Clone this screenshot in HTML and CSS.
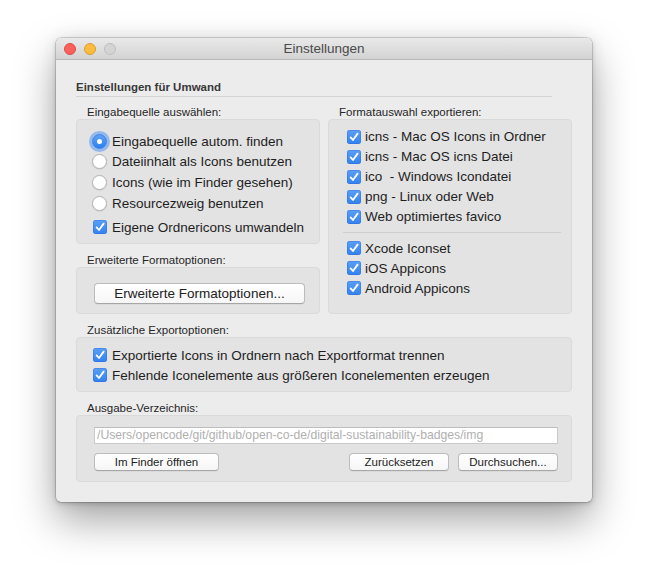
FILE: index.html
```html
<!DOCTYPE html>
<html lang="de">
<head>
<meta charset="utf-8">
<title>Einstellungen</title>
<link rel="stylesheet" href="styles.css">
</head>
<body>
<div class="window">
  <div class="titlebar">
    <div class="lights">
      <span class="light red"></span>
      <span class="light yellow"></span>
      <span class="light gray"></span>
    </div>
    <div class="title">Einstellungen</div>
    <div class="lights-spacer"></div>
  </div>
  <div class="content">
    <div class="heading">Einstellungen für Umwand</div>
    <div class="rule"></div>
    <div class="columns">
      <div class="col">
        <div class="label">Eingabequelle auswählen:</div>
        <div class="box box-source">
          <div class="row"><span class="ind"><span class="radio on"></span></span>Eingabequelle autom. finden</div>
          <div class="row"><span class="ind"><span class="radio"></span></span>Dateiinhalt als Icons benutzen</div>
          <div class="row"><span class="ind"><span class="radio"></span></span>Icons (wie im Finder gesehen)</div>
          <div class="row"><span class="ind"><span class="radio"></span></span>Resourcezweig benutzen</div>
          <div class="row row-sep"><span class="ind"><span class="check"><svg viewBox="0 0 14 14" width="14" height="14"><path d="M3.6 7.4 L6 10 L10.6 3.6" /></svg></span></span>Eigene Ordnericons umwandeln</div>
        </div>
        <div class="label">Erweiterte Formatoptionen:</div>
        <div class="box box-adv">
          <button class="btn btn-regular">Erweiterte Formatoptionen...</button>
        </div>
      </div>
      <div class="col">
        <div class="label">Formatauswahl exportieren:</div>
        <div class="box box-format">
          <div class="row"><span class="ind"><span class="check"><svg viewBox="0 0 14 14" width="14" height="14"><path d="M3.6 7.4 L6 10 L10.6 3.6" /></svg></span></span>icns - Mac OS Icons in Ordner</div>
          <div class="row"><span class="ind"><span class="check"><svg viewBox="0 0 14 14" width="14" height="14"><path d="M3.6 7.4 L6 10 L10.6 3.6" /></svg></span></span>icns - Mac OS icns Datei</div>
          <div class="row"><span class="ind"><span class="check"><svg viewBox="0 0 14 14" width="14" height="14"><path d="M3.6 7.4 L6 10 L10.6 3.6" /></svg></span></span>ico&nbsp; - Windows Icondatei</div>
          <div class="row"><span class="ind"><span class="check"><svg viewBox="0 0 14 14" width="14" height="14"><path d="M3.6 7.4 L6 10 L10.6 3.6" /></svg></span></span>png - Linux oder Web</div>
          <div class="row"><span class="ind"><span class="check"><svg viewBox="0 0 14 14" width="14" height="14"><path d="M3.6 7.4 L6 10 L10.6 3.6" /></svg></span></span>Web optimiertes favico</div>
          <div class="divider"></div>
          <div class="row"><span class="ind"><span class="check"><svg viewBox="0 0 14 14" width="14" height="14"><path d="M3.6 7.4 L6 10 L10.6 3.6" /></svg></span></span>Xcode Iconset</div>
          <div class="row"><span class="ind"><span class="check"><svg viewBox="0 0 14 14" width="14" height="14"><path d="M3.6 7.4 L6 10 L10.6 3.6" /></svg></span></span>iOS Appicons</div>
          <div class="row"><span class="ind"><span class="check"><svg viewBox="0 0 14 14" width="14" height="14"><path d="M3.6 7.4 L6 10 L10.6 3.6" /></svg></span></span>Android Appicons</div>
        </div>
      </div>
    </div>
    <div class="label">Zusätzliche Exportoptionen:</div>
    <div class="box box-extra">
      <div class="row"><span class="ind"><span class="check"><svg viewBox="0 0 14 14" width="14" height="14"><path d="M3.6 7.4 L6 10 L10.6 3.6" /></svg></span></span>Exportierte Icons in Ordnern nach Exportformat trennen</div>
      <div class="row"><span class="ind"><span class="check"><svg viewBox="0 0 14 14" width="14" height="14"><path d="M3.6 7.4 L6 10 L10.6 3.6" /></svg></span></span>Fehlende Iconelemente aus größeren Iconelementen erzeugen</div>
    </div>
    <div class="label">Ausgabe-Verzeichnis:</div>
    <div class="box box-out">
      <div class="field">/Users/opencode/git/github/open-co-de/digital-sustainability-badges/img</div>
      <div class="btn-row">
        <button class="btn btn-small btn-finder">Im Finder öffnen</button>
        <span class="spacer"></span>
        <button class="btn btn-small btn-reset">Zurücksetzen</button>
        <button class="btn btn-small btn-browse">Durchsuchen...</button>
      </div>
    </div>
  </div>
</div>
</body>
</html>
```

FILE: styles.css
```css
* { box-sizing: border-box; }

html, body {
  margin: 0;
  padding: 0;
  background: #ffffff;
}

body {
  font-family: "Liberation Sans", Arial, sans-serif;
  color: #222;
  padding: 38px 0 0 56px;
  height: 576px;
  overflow: hidden;
}

.window {
  width: 536px;
  height: 464px;
  background: #ececec;
  border-radius: 5px;
  box-shadow:
    0 0 0 0.5px rgba(0, 0, 0, 0.28),
    0 2px 4px rgba(0, 0, 0, 0.16),
    0 18px 40px rgba(0, 0, 0, 0.36),
    0 0 16px rgba(0, 0, 0, 0.08);
  overflow: hidden;
}

.titlebar {
  height: 22px;
  display: grid;
  grid-template-columns: 1fr auto 1fr;
  align-items: center;
  background: linear-gradient(#e9e9e9, #d3d3d3);
  border-bottom: 1px solid #b8b8b8;
}

.lights {
  display: flex;
  gap: 8px;
  padding-left: 8px;
  padding-top: 1px;
}

.light {
  width: 12px;
  height: 12px;
  border-radius: 50%;
}
.light.red { background: #fc605c; border: 0.5px solid #de4a44; }
.light.yellow { background: #fdbc40; border: 0.5px solid #dc9d2b; }
.light.gray { background: #d4d4d4; border: 0.5px solid #bdbdbd; }

.title {
  font-size: 13.5px;
  color: #4a4a4a;
  line-height: 16px;
}

.content {
  padding: 20px 20px 20px 20px;
}

.heading {
  font-size: 11.5px;
  font-weight: bold;
  color: #383838;
  line-height: 14px;
}

.rule {
  width: 476px;
  height: 1px;
  margin-top: 2px;
  background: #d4d4d4;
}

.columns {
  display: grid;
  grid-template-columns: 244px 244px;
  column-gap: 8px;
}

.col {
  display: flex;
  flex-direction: column;
}

.columns .col > .label:first-child {
  margin-top: 8px;
}

.label {
  font-size: 11.5px;
  line-height: 14px;
  color: #262626;
  padding-left: 11px;
  margin-top: 9px;
}

.box {
  background: #e3e3e3;
  border: 1px solid #dadada;
  border-radius: 4px;
}

.row {
  display: flex;
  align-items: center;
  height: 20px;
  font-size: 13.5px;
  color: #1e1e1e;
  white-space: nowrap;
}

.ind {
  width: 15px;
  height: 15px;
  margin-right: 5px;
  display: flex;
  align-items: center;
  justify-content: center;
  flex: none;
}

.radio {
  width: 15px;
  height: 15px;
  border-radius: 50%;
  background: #ffffff;
  border: 1px solid #b3b3b3;
  box-shadow: 0 0.5px 1px rgba(0, 0, 0, 0.12);
}

.radio.on {
  position: relative;
  background: linear-gradient(#5fa4f7, #2a7ff0);
  border: 1px solid #2f7ae0;
  box-shadow: 0 0 0 3px rgba(78, 152, 245, 0.55);
}

.radio.on::after {
  content: "";
  position: absolute;
  left: 4px;
  top: 4px;
  width: 5px;
  height: 5px;
  border-radius: 50%;
  background: #fff;
}

.check {
  width: 14px;
  height: 14px;
  border-radius: 3px;
  background: linear-gradient(#5a9ff6, #3381f0);
  box-shadow: inset 0 0 0 0.5px rgba(30, 100, 210, 0.6);
  display: block;
}

.check svg {
  display: block;
}

.check path {
  fill: none;
  stroke: #ffffff;
  stroke-width: 1.8;
  stroke-linecap: round;
  stroke-linejoin: round;
}

/* Eingabequelle box */
.box-source {
  height: 125px;
  padding: 11px 0 0 15px;
}
.box-source .row { height: 20.6px; }
.box-source .row.row-sep {
  margin-top: 4px;
  height: 20px;
}

/* Erweiterte box */
.box-adv {
  height: 47px;
  padding: 15px 0 0 17px;
}

.btn {
  font-family: "Liberation Sans", Arial, sans-serif;
  background: linear-gradient(#ffffff, #f6f6f6);
  border: 1px solid #bcbcbc;
  border-bottom-color: #a6a6a6;
  border-radius: 4px;
  color: #222;
  padding: 0;
  box-shadow: 0 0.5px 0.5px rgba(0, 0, 0, 0.08);
}

.btn-regular {
  width: 211px;
  height: 21px;
  font-size: 13.5px;
  line-height: 19px;
}

.btn-small {
  height: 18px;
  font-size: 11.5px;
  line-height: 16px;
}

/* Formatauswahl box */
.box-format {
  height: 195px;
  padding: 6.5px 0 0 17px;
}
.box-format .row .ind { margin-right: 4px; }

.divider {
  height: 1px;
  background: #cfcfcf;
  width: 218px;
  margin: 5.5px 0 5.2px -3px;
}

/* Zusätzliche box */
.box-extra {
  height: 55px;
  padding: 7px 0 0 15px;
}

/* Ausgabe box */
.box-out {
  height: 67px;
  padding: 11px 13px 0 17px;
}

.field {
  height: 17px;
  width: 464px;
  background: #ffffff;
  border: 1px solid #cacaca;
  border-top-color: #bdbdbd;
  font-size: 12.2px;
  line-height: 15px;
  color: #b0b0b0;
  padding-left: 2px;
  white-space: nowrap;
  overflow: hidden;
}

.btn-row {
  display: flex;
  margin-top: 9px;
  width: 464px;
}

.spacer { flex: 1; }

.btn-finder { width: 125px; }
.btn-reset { width: 100px; margin-right: 9px; }
.btn-browse { width: 100px; }
```
